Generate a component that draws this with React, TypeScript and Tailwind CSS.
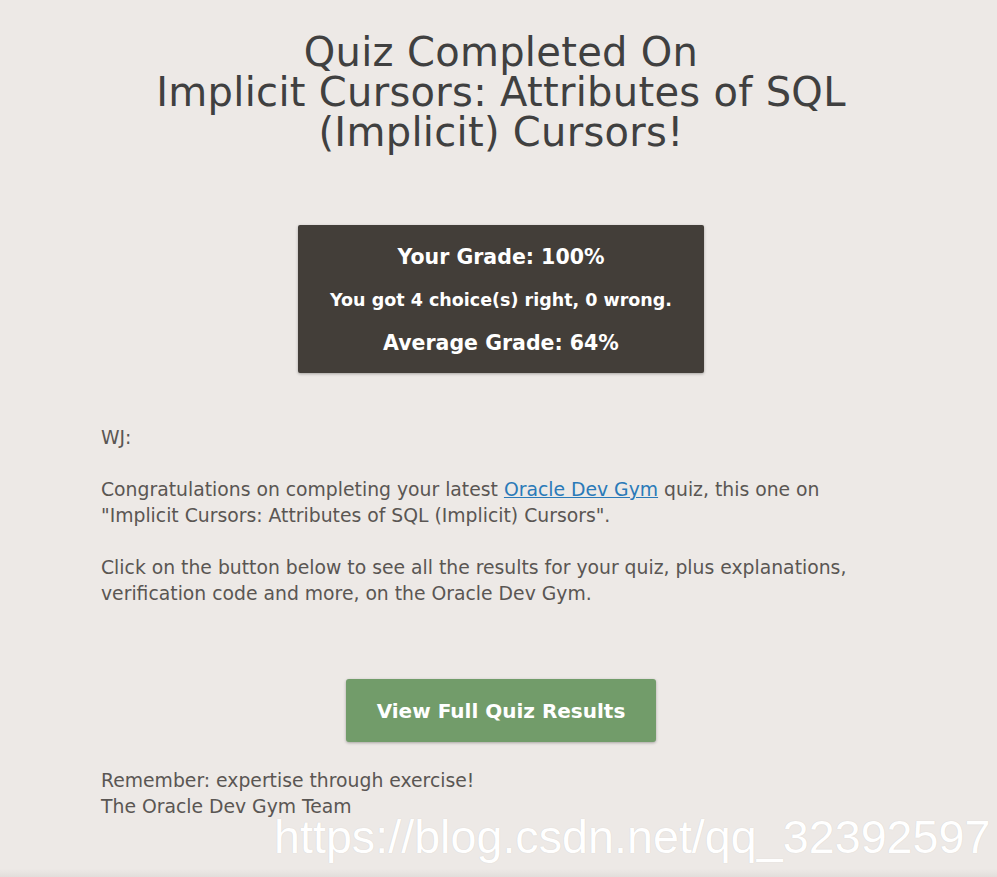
export default function App() {
  return (
    <div className="relative min-h-[877px] w-full overflow-hidden bg-[#ede9e6] font-['DejaVu_Sans',Verdana,sans-serif]">
      <div className="ml-[101px] w-[800px] pt-[32px]">
        <h1 className="text-center text-[40px] leading-[40px] tracking-[0.3px] font-normal text-[#404040]">
          Quiz Completed On
          <br />
          Implicit Cursors: Attributes of SQL
          <br />
          (Implicit) Cursors!
        </h1>

        <div className="mt-[73px] flex justify-center">
          <div className="w-[406px] h-[148px] rounded-[2px] bg-[#433e39] shadow-[0_1px_3px_rgba(0,0,0,0.3)] flex flex-col items-center pt-[19px] text-white font-bold">
            <p className="text-[20.5px] leading-[26px]">Your Grade: 100%</p>
            <p className="mt-[19px] text-[17.5px] leading-[22px]">You got 4 choice(s) right, 0 wrong.</p>
            <p className="mt-[19px] text-[20.5px] leading-[26px]">Average Grade: 64%</p>
          </div>
        </div>

        <div className="mt-[52px] text-[18.8px] leading-[26px] text-[#5a5653]">
          <p>WJ:</p>
          <p className="mt-[26px]">
            Congratulations on completing your latest{" "}
            <a href="#" className="text-[#2a7ab8] underline">
              Oracle Dev Gym
            </a>{" "}
            quiz, this one on "Implicit Cursors: Attributes of SQL (Implicit) Cursors".
          </p>
          <p className="mt-[26px]">
            Click on the button below to see all the results for your quiz, plus explanations, verification code and more, on the Oracle Dev Gym.
          </p>
        </div>

        <div className="mt-[72px] flex justify-center">
          <button className="w-[310px] h-[63px] rounded-[3px] bg-[#729c6a] text-white font-bold text-[20px] shadow-[0_1px_3px_rgba(0,0,0,0.3)]">
            View Full Quiz Results
          </button>
        </div>

        <div className="mt-[26px] text-[18.8px] leading-[26px] text-[#5a5653]">
          <p>Remember: expertise through exercise!</p>
          <p>The Oracle Dev Gym Team</p>
        </div>
      </div>

      <div className="pointer-events-none absolute left-[274px] top-[807px] font-['Liberation_Sans',Arial,sans-serif] text-[46.7px] leading-[60px] text-white [text-shadow:0_0_1px_rgba(0,0,0,0.15)]">
        https://blog.csdn.net/qq_32392597
      </div>
      <div className="absolute left-0 right-0 bottom-0 h-[8px] bg-gradient-to-b from-transparent to-[#e2dedb]" />
    </div>
  );
}
